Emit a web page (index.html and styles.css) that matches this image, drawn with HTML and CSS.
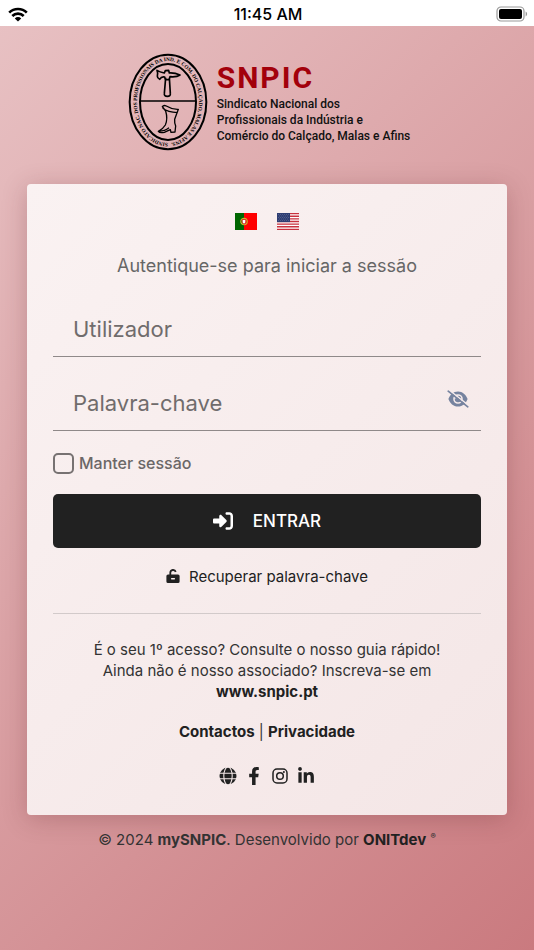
FILE: index.html
```html
<!DOCTYPE html>
<html lang="pt">
<head>
  <meta charset="UTF-8" />
  <title>mySNPIC</title>
  <meta name="viewport" content="width=device-width, initial-scale=1.0" />
  <link rel="stylesheet" href="styles.css">
</head>
<body>

  <div class="statusbar">
    <svg class="wifi" viewBox="0 0 20 15" aria-hidden="true">
      <g fill="none" stroke="#000" stroke-width="2.6">
        <path d="M1.2 5.6a12.4 12.4 0 0 1 17.6 0" />
        <path d="M4.3 9a8 8 0 0 1 11.4 0" />
      </g>
      <path d="M10 14.6L6.8 11.4a4.6 4.6 0 0 1 6.4 0z" />
    </svg>
    <span class="time">11:45 AM</span>
    <svg class="battery" viewBox="0 0 32 16" aria-hidden="true">
      <rect x="1" y="1" width="27" height="14" rx="4" fill="none" stroke="#999" stroke-width="1.2" />
      <rect x="3" y="3" width="23" height="10" rx="2" />
      <path d="M29.6 5.6c2 .8 2 4 0 4.8z" fill="#999" />
    </svg>
  </div>

  <header class="brand">
    <svg class="seal" viewBox="27 24 240 294" role="img" aria-label="SNPIC">
      <defs>
        <path id="ring" d="M147 294A93 123 0 0 1 147 48A93 123 0 0 1 147 294" />
      </defs>
      <g fill="none" stroke="#000">
        <ellipse cx="147" cy="171" rx="115" ry="142" stroke-width="6" />
        <ellipse cx="147" cy="171" rx="84" ry="114" stroke-width="6" />
        <path d="M63 168h168" stroke-width="5" />
        <path d="M140 98l-4 48q-1 8 9 8t9-8l-3-48M114 76q8 5 22 8l3-7 10-1 2 8q16-1 32 6-10 7-30 5l-2 8-12 1-2-8q-10-2-15 7-7-3-7-9 3-9-1-18z" stroke-width="5" stroke-linejoin="round" />
        <path d="M130 185q4-6 12-2 18 11 36 10l-11 30q-1 10 3 20l-2 18-12 1-2-8-18 8q-14 3-18-3 14-7 21-19 8-18 1-42zM131 190q16 12 44 13M118 258q18 1 32-10" stroke-width="4" stroke-linejoin="round" />
      </g>
      <text class="ring-text"><textPath href="#ring">SINDICATO NAC. DOS PROFISSIONAIS DA IND. E COM. DO CALÇADO, MALAS E AFINS.</textPath></text>
    </svg>
    <div class="brand-text">
      <h1>SNPIC</h1>
      <p>Sindicato Nacional dos<br>Profissionais da Indústria e<br>Comércio do Calçado, Malas e Afins</p>
    </div>
  </header>

  <main class="card">
    <div class="languages">
      <a href="#pt" aria-label="Português">
        <svg class="flag" viewBox="0 0 22 17">
          <path fill="#060" d="M0 0h9v17H0z" />
          <path fill="#f00" d="M9 0h13v17H9z" />
          <circle cx="9" cy="8.5" r="3.2" fill="none" stroke="#c9b92a" stroke-width="1.2" />
          <path d="M7.2 6.5h3.6v2.6q0 1.4-1.8 2-1.8-.6-1.8-2z" fill="#fff" stroke="#d22" stroke-width=".9" />
        </svg>
      </a>
      <a href="#en" aria-label="English">
        <svg class="flag" viewBox="0 0 22 17">
          <path fill="#fff" d="M0 0h22v17H0z" />
          <path d="M0 .65h22M0 3.27h22M0 5.88h22M0 8.5h22M0 11.12h22M0 13.73h22M0 16.35h22" stroke="#c8313e" stroke-width="1.3" />
          <path fill="#2e3d72" d="M0 0h13v9.1H0z" />
          <path d="M1 1.5h11M2 3h10M1 4.5h11M2 6h10M1 7.5h11" stroke="#7f8ab0" stroke-width=".6" stroke-dasharray=".7 1.3" />
        </svg>
      </a>
    </div>

    <p class="intro">Autentique-se para iniciar a sessão</p>

    <form>
      <div class="field">
        <input type="text" id="user" placeholder="Utilizador" aria-label="Utilizador" />
      </div>
      <div class="field">
        <input type="password" id="password" placeholder="Palavra-chave" aria-label="Palavra-chave" />
        <button type="button" class="toggle" aria-label="Mostrar palavra-chave">
          <svg viewBox="0 0 22 18">
            <defs>
              <mask id="slash">
                <path fill="#fff" d="M0 0h22v18H0z" />
                <path d="M1.5-.4L22 15.6" stroke="#000" stroke-width="1.4" />
              </mask>
            </defs>
            <path mask="url(#slash)" fill-rule="evenodd" d="M11 1.4c4.6 0 8 3.2 9.6 7.6-1.6 4.400-5 7.600-9.600 7.600S3 13.400 1.400 9C3 4.600 6.400 1.400 11 1.400zM11 4.200a4.800 4.800 0 1 0 0 9.600 4.800 4.800 0 0 0 0-9.600zM11 5.800a3.200 3.200 0 1 1-3.100 2.500 2.100 2.100 0 0 0 2.600-2.400z" />
            <path d="M1.2 1.2l19.6 15.6" stroke="#76839f" stroke-width="1.7" stroke-linecap="round" />
          </svg>
        </button>
      </div>

      <label class="keep" for="keep">
        <input type="checkbox" id="keep" />
        Manter sessão
      </label>

      <button type="submit" class="enter">
        <svg viewBox="0 0 512 512"><path d="M217.9 105.9L340.7 228.7c7.2 7.2 11.3 17.1 11.3 27.3s-4.1 20.1-11.3 27.3L217.9 406.1c-6.4 6.4-15 9.9-24 9.9c-18.7 0-33.9-15.2-33.9-33.9l0-62.1L32 320c-17.7 0-32-14.3-32-32l0-64c0-17.7 14.3-32 32-32l128 0 0-62.1c0-18.7 15.2-33.9 33.9-33.9c9 0 17.6 3.6 24 9.9zM352 416l64 0c17.7 0 32-14.3 32-32l0-256c0-17.7-14.3-32-32-32l-64 0c-17.7 0-32-14.3-32-32s14.3-32 32-32l64 0c53 0 96 43 96 96l0 256c0 53-43 96-96 96l-64 0c-17.7 0-32-14.3-32-32s14.3-32 32-32z" /></svg>
        ENTRAR
      </button>
    </form>

    <a class="recover" href="#recover">
      <svg viewBox="0 0 14 16"><path fill-rule="evenodd" d="M3.4 6.5V4.6a3.7 3.7 0 0 1 7.2-1.1l-1.7.7A1.9 1.9 0 0 0 5.2 4.7V6.5H12a1.6 1.6 0 0 1 1.6 1.6v5.3A1.6 1.6 0 0 1 12 15H2A1.6 1.6 0 0 1 .4 13.4V8.1A1.6 1.6 0 0 1 2 6.5zM5.7 10a.8.8 0 0 0 0 1.6h2.600a.8.8 0 0 0 0-1.600z" /></svg>
      Recuperar palavra-chave
    </a>

    <hr>

    <p class="help">É o seu 1º acesso? Consulte o nosso guia rápido!<br>Ainda não é nosso associado? Inscreva-se em<br><a href="#snpic">www.snpic.pt</a></p>

    <p class="links"><a href="#contactos">Contactos</a> | <a href="#privacidade">Privacidade</a></p>

    <div class="social">
      <a href="#site" aria-label="Site">
        <svg viewBox="0 0 18 18">
          <circle cx="9" cy="9" r="8.5" />
          <g fill="none" stroke="#f6eaea" stroke-width="1.1">
            <path d="M0 6.2h18M0 11.8h18" />
            <ellipse cx="9" cy="9" rx="4.2" ry="9" />
          </g>
        </svg>
      </a>
      <a href="#facebook" aria-label="Facebook">
        <svg viewBox="-96 0 512 512"><path d="M279.14 288l14.22-92.66h-88.91v-60.13c0-25.35 12.42-50.06 52.24-50.06h40.42V6.26S260.43 0 225.36 0c-73.22 0-121.08 44.38-121.08 124.72v70.62H22.89V288h81.39v224h100.17V288z" /></svg>
      </a>
      <a href="#instagram" aria-label="Instagram">
        <svg viewBox="0 0 18 18">
          <g fill="none" stroke="#212121" stroke-width="1.5">
            <rect x="2" y="2" width="14" height="14" rx="4" />
            <circle cx="9" cy="9" r="3.3" />
          </g>
          <circle cx="12.9" cy="5.1" r="1" />
        </svg>
      </a>
      <a href="#linkedin" aria-label="LinkedIn">
        <svg viewBox="-32 0 512 512"><path d="M100.28 448H7.4V148.9h92.88zM53.79 108.1C24.09 108.1 0 83.5 0 53.8a53.79 53.79 0 0 1 107.58 0c0 29.7-24.1 54.3-53.79 54.3zM447.9 448h-92.68V302.4c0-34.7-.7-79.2-48.29-79.2-48.29 0-55.69 37.7-55.69 76.7V448h-92.78V148.9h89.08v40.8h1.3c12.4-23.5 42.69-48.3 87.88-48.3 94 0 111.28 61.9 111.28 142.3V448z" /></svg>
      </a>
    </div>
  </main>

  <footer>© 2024 <b>mySNPIC</b>. Desenvolvido por <a href="#onitdev">ONITdev</a> <sup>®</sup></footer>

</body>
</html>
```
FILE: styles.css
```css
* {
  box-sizing: border-box;
}

body {
  margin: 0;
  min-height: 100vh;
  font-family: Inter, 'Open Sans', sans-serif;
  font-size: 15px;
  line-height: 21px;
  color: #333;
  background: linear-gradient(135deg, #e8c2c4, #ca7a7f);
}

h1, p {
  margin: 0;
}

a {
  color: #212121;
  font-weight: 700;
  text-decoration: none;
}

svg {
  display: block;
}

.statusbar {
  display: grid;
  grid-template-columns: 1fr auto 1fr;
  align-items: center;
  height: 26px;
  padding: 2px 6px 0 8px;
  background: #fff;
}

.wifi {
  width: 20px;
  height: 15px;
}

.time {
  font-size: 16px;
  font-weight: 500;
  color: #000;
}

.battery {
  width: 32px;
  height: 16px;
  justify-self: end;
}

.brand {
  display: flex;
  justify-content: center;
  gap: 9px;
  padding: 27px 0 33px 4px;
}

.seal {
  width: 80px;
  height: 98px;
}

.ring-text {
  font-family: 'Liberation Serif', serif;
  font-size: 16px;
  font-weight: 700;
}

.brand-text {
  padding-top: 7px;
  font-family: Roboto, sans-serif;
}

.brand-text h1 {
  font-size: 30px;
  line-height: 36px;
  letter-spacing: 2px;
  color: #a3000b;
}

.brand-text p {
  font-size: 12px;
  font-weight: 500;
  line-height: 16px;
  color: #111;
}

.card {
  margin: 0 27px;
  padding: 29px 26px 30px;
  border-radius: 4px;
  background: linear-gradient(135deg, #faf2f2, #f4e6e6);
  box-shadow: 0 4px 24px rgba(90, 30, 35, 0.25);
}

.languages {
  display: flex;
  justify-content: center;
  gap: 20px;
}

.flag {
  width: 22px;
  height: 17px;
}

.intro {
  margin: 24px 0 25px;
  font-size: 18px;
  line-height: 24px;
  text-align: center;
  color: #666;
}

.field {
  position: relative;
  margin-bottom: 20px;
}

.field input {
  display: block;
  width: 100%;
  height: 54px;
  padding: 0 60px 2px 20px;
  border: none;
  border-bottom: 1px solid #8f8989;
  border-radius: 0;
  background: none;
  font-family: inherit;
  font-size: 22px;
  color: #333;
}

.field input::placeholder {
  color: #706c6c;
  opacity: 1;
}

.toggle {
  position: absolute;
  top: 13px;
  right: 12px;
  padding: 0;
  border: none;
  background: none;
  cursor: pointer;
}

.toggle svg {
  width: 22px;
  height: 18px;
  fill: #76839f;
}

.keep {
  display: flex;
  align-items: center;
  gap: 5px;
  padding-top: 2px;
  font-size: 16px;
  font-weight: 500;
  color: #6b6767;
}

.keep input {
  appearance: none;
  width: 21px;
  height: 21px;
  margin: 0;
  border: 2px solid #777272;
  border-radius: 5px;
}

.enter {
  display: flex;
  align-items: center;
  justify-content: center;
  gap: 20px;
  width: 100%;
  height: 54px;
  margin: 20px 0 18px;
  border: none;
  border-radius: 5px;
  background: #212121;
  color: #fff;
  font-family: inherit;
  font-size: 17px;
  font-weight: 500;
  cursor: pointer;
}

.enter svg {
  width: 20px;
  height: 20px;
  fill: #fff;
}

.recover {
  display: flex;
  justify-content: center;
  gap: 9px;
  font-weight: 400;
}

.recover svg {
  width: 14px;
  height: 16px;
  margin-top: 2px;
  fill: #212121;
}

hr {
  margin: 26px 0 25px;
  border: none;
  border-top: 1px solid #d2caca;
}

.help, .links {
  text-align: center;
}

.links {
  margin: 19px 0 25px;
}

.social {
  display: flex;
  justify-content: center;
  gap: 8px;
}

.social svg {
  width: 18px;
  height: 18px;
  fill: #212121;
}

footer {
  padding: 14px 0;
  text-align: center;
}

sup {
  font-size: 8px;
  font-weight: 700;
  line-height: 0;
}
```
